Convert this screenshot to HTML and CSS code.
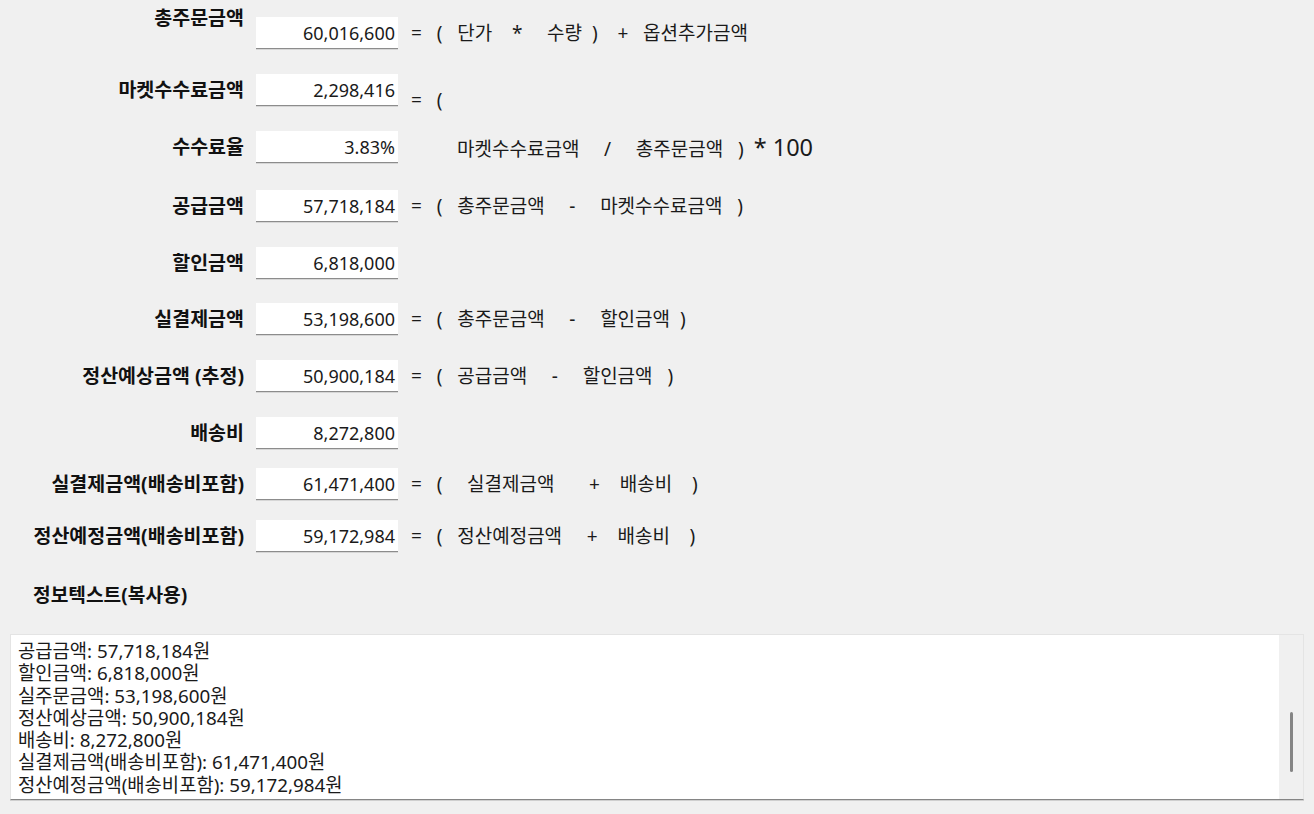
FILE: index.html
```html
<!DOCTYPE html>
<html lang="ko">
<head>
<meta charset="utf-8">
<title>정산 계산</title>
<link rel="stylesheet" href="styles.css">
</head>
<body>
<main class="page">
  <section class="form">
    <div class="label high">총주문금액</div>
    <div class="box">60,016,600</div>
    <div class="expr">=   (   단가    *     수량  )    +   옵션추가금액</div>

    <div class="label">마켓수수료금액</div>
    <div class="box">2,298,416</div>
    <div class="expr low">=   (</div>

    <div class="label">수수료율</div>
    <div class="box">3.83%</div>
    <div class="expr cont">마켓수수료금액     /     총주문금액   )  <span class="big">* 100</span></div>

    <div class="label">공급금액</div>
    <div class="box">57,718,184</div>
    <div class="expr">=   (   총주문금액     -     마켓수수료금액   )</div>

    <div class="label">할인금액</div>
    <div class="box">6,818,000</div>
    <div class="expr"></div>

    <div class="label">실결제금액</div>
    <div class="box">53,198,600</div>
    <div class="expr">=   (   총주문금액     -     할인금액  )</div>

    <div class="label">정산예상금액 (추정)</div>
    <div class="box">50,900,184</div>
    <div class="expr">=   (   공급금액     -     할인금액   )</div>

    <div class="label">배송비</div>
    <div class="box">8,272,800</div>
    <div class="expr"></div>

    <div class="label">실결제금액(배송비포함)</div>
    <div class="box">61,471,400</div>
    <div class="expr">=   (     실결제금액       +    배송비    )</div>

    <div class="label">정산예정금액(배송비포함)</div>
    <div class="box">59,172,984</div>
    <div class="expr">=   (   정산예정금액     +    배송비    )</div>
  </section>

  <h2 class="info-title">정보텍스트(복사용)</h2>

  <div class="info">
    <div class="info-text">
      <div>공급금액: 57,718,184원</div>
      <div>할인금액: 6,818,000원</div>
      <div>실주문금액: 53,198,600원</div>
      <div>정산예상금액: 50,900,184원</div>
      <div>배송비: 8,272,800원</div>
      <div>실결제금액(배송비포함): 61,471,400원</div>
      <div>정산예정금액(배송비포함): 59,172,984원</div>
    </div>
    <div class="scroll">
      <div class="thumb"></div>
    </div>
  </div>
</main>
</body>
</html>
```
FILE: styles.css
```css
html, body {
  margin: 0;
  padding: 0;
  background: #f0f0f0;
}

body {
  font-family: "Noto Sans", "Noto Sans CJK KR", sans-serif;
  color: #111;
  width: 1314px;
  height: 814px;
  overflow: hidden;
}

.page {
  padding: 17px 0 0 0;
}

.form {
  display: grid;
  grid-template-columns: 256px 142px 1fr;
  grid-template-rows: 57px 57px 59px 57px 56px 57px 57px 51px 52px 32px;
  align-items: start;
}

.label {
  height: 32px;
  line-height: 32px;
  padding-right: 12px;
  text-align: right;
  font-size: 19.5px;
  font-weight: 700;
  color: #111;
  white-space: nowrap;
}

.label.high {
  margin-top: -15px;
}

.box {
  box-sizing: border-box;
  height: 32px;
  line-height: 32px;
  background: #fff;
  border-bottom: 1px solid #8c8c8c;
  box-shadow: 0 1px 0 #d6d6d6;
  text-align: right;
  padding-right: 3px;
  font-size: 18px;
  color: #1a1a1a;
  white-space: nowrap;
}

.expr {
  height: 32px;
  line-height: 32px;
  padding-left: 13px;
  font-size: 19px;
  white-space: pre;
  color: #1a1a1a;
}

.expr.low {
  margin-top: 10px;
}

.expr.cont {
  padding-left: 59px;
}

.big {
  font-size: 23.5px;
}

.info-title {
  margin: 31px 0 0 33px;
  height: 24px;
  line-height: 24px;
  font-size: 19.2px;
  font-weight: 700;
  color: #111;
}

.info {
  box-sizing: border-box;
  margin: 27px 0 0 10px;
  width: 1294px;
  height: 166px;
  display: flex;
  background: #fff;
  border: 1px solid #e4e4e4;
  border-bottom: 1px solid #858585;
  box-shadow: 0 1px 0 #cfcfcf;
}

.info-text {
  flex: 1;
  padding: 5px 0 0 7px;
  font-size: 18.8px;
  line-height: 22.3px;
  color: #1a1a1a;
  white-space: nowrap;
}

.scroll {
  width: 24px;
  background: #f0f0f0;
  display: flex;
  justify-content: center;
}

.thumb {
  width: 3px;
  height: 60px;
  margin-top: 77px;
  border-radius: 2px;
  background: #858585;
}
```
